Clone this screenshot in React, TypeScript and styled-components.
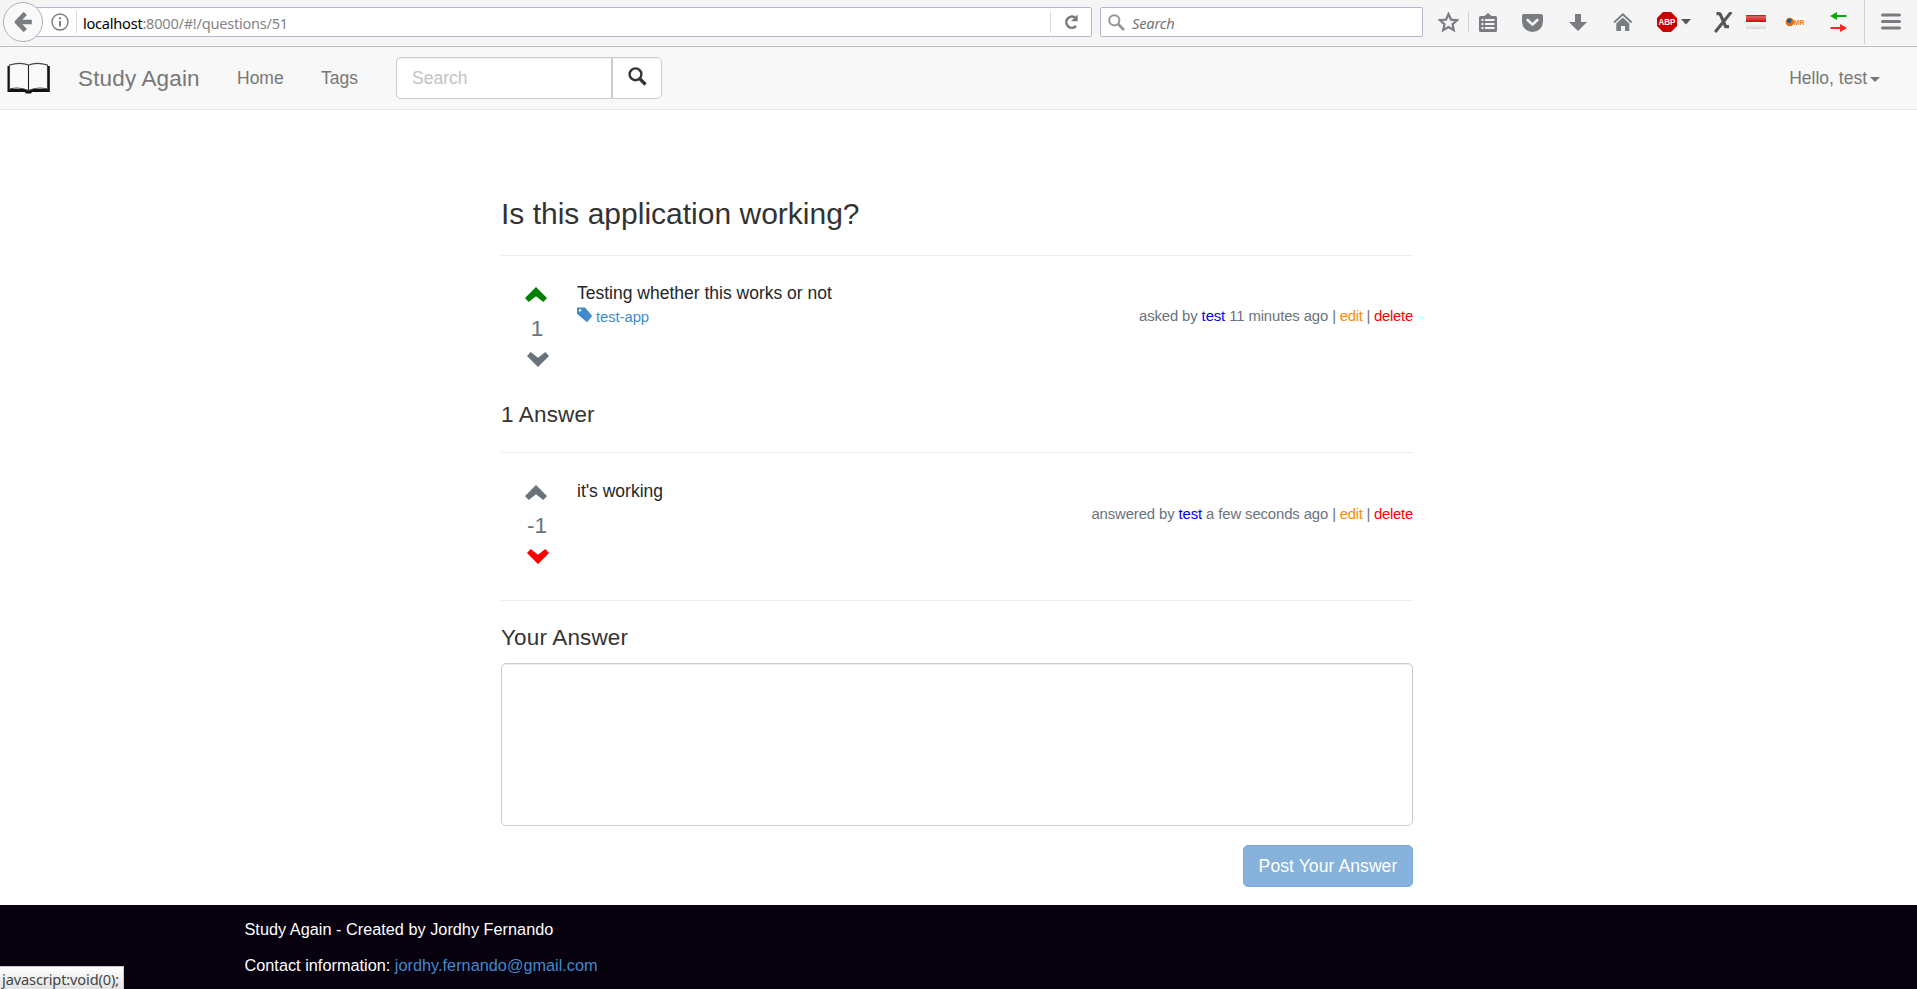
import React from 'react';
import styled, { createGlobalStyle } from 'styled-components';

const GlobalStyle = createGlobalStyle`
  *, *::before, *::after { box-sizing: border-box; }
  body {
    margin: 0;
    background: #fff;
    color: #333;
    font: 17.5px/25px "Liberation Sans", Arial, sans-serif;
  }
  a { text-decoration: none; color: #428bca; }
  h3, h4, p { margin: 0; font-weight: 400; }
  svg { display: block; flex: none; }
`;

const Page = styled.div`
  height: 989px;
  display: flex;
  flex-direction: column;
  position: relative;
  overflow: hidden;
`;

/* Browser toolbar */
const Chrome = styled.div`
  height: 47px;
  flex: none;
  display: flex;
  align-items: flex-start;
  background: #f5f5f5;
  border-bottom: 1px solid #bbbdbf;
  font-family: "Noto Sans", "Open Sans", sans-serif;
  font-size: 14.6px;
`;
const BackButton = styled.div`
  width: 40px;
  height: 40px;
  margin: 2px -10px 0 3px;
  border: 1px solid #a9b2bd;
  border-radius: 50%;
  background: #f9f9f9;
  display: flex;
  align-items: center;
  justify-content: center;
  z-index: 1;
`;
const UrlBar = styled.div`
  width: 1059px;
  height: 30px;
  margin-top: 7px;
  border: 1px solid #b1bac6;
  border-radius: 2px;
  background: #fff;
  display: flex;
  align-items: center;
  padding: 0 13px 0 17px;
`;
const BarRule = styled.div`
  width: 1px;
  height: 22px;
  background: #d9dbdd;
`;
const Url = styled.span`
  flex: 1;
  margin-left: 6px;
  color: #858585;
  letter-spacing: -0.25px;
  line-height: 28px;
  padding-top: 1px;
  b { font-weight: 400; color: #000; }
`;
const SearchBar = styled.div`
  width: 323px;
  height: 30px;
  margin: 7px 0 0 8px;
  border: 1px solid #b1bac6;
  border-radius: 2px;
  background: #fff;
  display: flex;
  align-items: center;
  padding-left: 7px;
  gap: 7px;
  color: #757575;
  font-style: italic;
  letter-spacing: -0.15px;
  span { padding-top: 2px; }
`;
const Tool = styled.div<{ $gap: number; $top?: number }>`
  margin-left: ${p => p.$gap}px;
  margin-top: ${p => p.$top ?? 12}px;
`;
const ToolRule = styled.div<{ $gap: number; $tall?: boolean }>`
  width: 1px;
  height: ${p => (p.$tall ? 44 : 20)}px;
  margin: ${p => (p.$tall ? 0 : 12)}px 0 0 ${p => p.$gap}px;
  background: #cfd1d3;
`;

/* Site navigation */
const Navbar = styled.nav`
  height: 63px;
  flex: none;
  display: flex;
  align-items: center;
  padding: 0 37px 0 7px;
  background: #f8f8f8;
  border-bottom: 1px solid #e7e7e7;
  color: #777;
`;
const Brand = styled.a`
  margin-left: 28px;
  width: 159px;
  color: #777;
  font-size: 22.5px;
  letter-spacing: 0.15px;
`;
const NavLink = styled.a<{ $width: number }>`
  width: ${p => p.$width}px;
  color: #777;
`;
const SearchGroup = styled.div`
  display: flex;
  width: 266px;
  height: 42px;
  border: 1px solid #ccc;
  border-radius: 5px;
  background: #fff;
  box-shadow: inset 0 1px 1px rgba(0, 0, 0, 0.06);
`;
const SearchInput = styled.div`
  width: 216px;
  padding: 8px 15px;
  border-right: 2px solid #ccc;
  color: #c3c3c3;
`;
const SearchButton = styled.div`
  flex: 1;
  padding: 9px 0 0 15px;
`;
const UserMenu = styled.a`
  margin-left: auto;
  display: flex;
  align-items: center;
  gap: 3px;
  color: #777;
`;
const Caret = styled.span`
  border: 5px solid transparent;
  border-top-color: #777;
  border-bottom: 0;
  margin-top: 3px;
`;

/* Question page */
const Main = styled.main`
  flex: none;
  width: 912px;
  height: 795px;
  margin-left: 501px;
  padding-top: 87px;
`;
const Title = styled.h3`
  height: 58px;
  font-size: 30px;
  line-height: 34px;
`;
const Subtitle = styled.h4<{ $height: number; $top?: number }>`
  height: ${p => p.$height}px;
  padding-top: ${p => p.$top ?? 0}px;
  font-size: 22.5px;
  line-height: 26px;
  letter-spacing: 0.15px;
`;
const Rule = styled.div`
  height: 1px;
  background: #eee;
`;
const Post = styled.article<{ $height: number; $top: number }>`
  display: flex;
  height: ${p => p.$height}px;
  padding-top: ${p => p.$top}px;
`;
const Votes = styled.div`
  width: 76px;
  padding: 6px 0 0 24px;
  color: #6a737c;
  font-size: 22.5px;
`;
const Count = styled.div<{ $top: number }>`
  width: 24px;
  height: 25px;
  margin: ${p => p.$top}px 0 11px;
  text-align: center;
  white-space: nowrap;
`;
const Body = styled.div`
  flex: 1;
  min-width: 0;
`;
const Text = styled.p`
  color: #242729;
`;
const Details = styled.div`
  display: flex;
  justify-content: space-between;
  font-size: 14.875px;
  line-height: 21px;
`;
const Tag = styled.a`
  display: flex;
  gap: 4px;
  letter-spacing: -0.08px;
  padding-top: 1px;
`;
const Meta = styled.span`
  margin-left: auto;
  color: #6a737c;
  letter-spacing: -0.11px;
`;
const Actions = styled.span`
  letter-spacing: -0.25px;
`;
const Action = styled.a<{ $color: string }>`
  color: ${p => p.$color};
`;
const AnswerBox = styled.div`
  height: 163px;
  border: 1px solid #ccc;
  border-radius: 5px;
  box-shadow: inset 0 1px 1px rgba(0, 0, 0, 0.075);
`;
const PostButton = styled.button`
  display: block;
  width: 170px;
  height: 42px;
  margin: 19px 0 0 auto;
  padding: 0;
  border: 1px solid #75a9d7;
  border-radius: 5px;
  background: #86b2db;
  color: #fff;
  font: inherit;
  letter-spacing: 0.1px;
`;
const Footer = styled.footer`
  flex: 1;
  padding: 12px 0 0 244.5px;
  background: #06000f;
  color: #fff;
  font-size: 16.25px;
  line-height: 25px;
  letter-spacing: 0.02px;
  p + p { margin-top: 11px; }
`;
const StatusTip = styled.div`
  position: absolute;
  left: 0;
  bottom: 0;
  width: 124px;
  height: 23px;
  padding: 3px 0 0 2px;
  border: 1px solid #c8c8c8;
  border-width: 1px 1px 0 0;
  background: linear-gradient(#fff, #e2e2e2);
  color: #444;
  font: 14.6px/19px "Noto Sans", "Open Sans", sans-serif;
  letter-spacing: -0.13px;
  white-space: nowrap;
`;

const GREY = '#797c80';

const BackIcon = () => (
  <svg width="18" height="20" viewBox="0 0 18 20" fill="none" stroke={GREY} strokeWidth="4.6" strokeLinejoin="round">
    <path d="M17.8 10H4M11.3 1.5 3 10l8.3 8.5" />
  </svg>
);
const InfoIcon = () => (
  <svg width="18" height="18" viewBox="0 0 18 18" fill="none" stroke="#7d7d7d">
    <circle cx="9" cy="9" r="8" strokeWidth="1.4" />
    <path d="M9 8v5.5M9 4.3v2" strokeWidth="2" />
  </svg>
);
const ReloadIcon = () => (
  <svg width="14" height="16" viewBox="0 0 14 16">
    <path d="M11 3.5A5.6 5.6 0 1 0 12 12" fill="none" stroke="#7a7a7a" strokeWidth="2.6" />
    <path d="M13.7.5v6.8H7z" fill="#7a7a7a" />
  </svg>
);
const LoupeIcon = () => (
  <svg width="17" height="17" viewBox="0 0 17 17" fill="none" stroke="#959595">
    <circle cx="6.3" cy="6.3" r="5.1" strokeWidth="2" />
    <path d="m10 10 6 6" strokeWidth="2.8" />
  </svg>
);
const StarIcon = () => (
  <svg width="21" height="20" viewBox="0 0 21 20" fill="none" stroke={GREY} strokeWidth="2.2">
    <path d="m10.5 2 2.5 5.6 6 .6-4.5 4 1.3 6-5.3-3.1-5.3 3.1 1.3-6-4.5-4 6-.6z" />
  </svg>
);
const ClipboardIcon = () => (
  <svg width="18" height="19" viewBox="0 0 18 19">
    <path d="M1.5 3h4L9 0l3.5 3h4q1.500 0 1.500 1.500v13q0 1.500-1.500 1.500h-15Q0 19 0 17.500v-13Q0 3 1.500 3z" fill={GREY} />
    <path d="M2.500 6h2v2h-2zM6 6h9.500v2H6zM2.500 10h2v2h-2zM6 10h9.500v2H6zM2.500 14h2v2h-2zM6 14h9.500v2H6z" fill="#f5f5f5" />
  </svg>
);
const PocketIcon = () => (
  <svg width="21" height="18" viewBox="0 0 21 18">
    <path d="M2 0h17q2 0 2 2v5.500a10.500 10.500 0 0 1-21 0V2Q0 0 2 0z" fill={GREY} />
    <path d="m5.700 6 4.800 4.600L15.300 6" fill="none" stroke="#f5f5f5" strokeWidth="2.6" strokeLinecap="round" strokeLinejoin="round" />
  </svg>
);
const DownloadIcon = () => (
  <svg width="18" height="17" viewBox="0 0 18 17" fill={GREY}>
    <path d="M6 0h6v8h6l-9 9-9-9h6z" />
  </svg>
);
const HomeIcon = () => (
  <svg width="20" height="19" viewBox="0 0 20 19">
    <path d="M1 9.500 9.800 1.300l8.800 8.200" fill="none" stroke={GREY} strokeWidth="1.8" />
    <path d="m3.300 10.500 6.500-6 6.500 6V18H12v-5H8v5H3.300z" fill={GREY} />
  </svg>
);
const AbpIcon = () => (
  <svg width="20" height="20" viewBox="0 0 20 20">
    <path d="M6 0h8l6 6v8l-6 6H6l-6-6V6z" fill="#c80000" />
    <text x="10" y="13.300" fill="#fff" fontFamily="Liberation Sans, sans-serif" fontWeight="700" fontSize="9" textAnchor="middle" textLength="17" lengthAdjust="spacingAndGlyphs">ABP</text>
  </svg>
);
const DropIcon = () => (
  <svg width="10" height="6" viewBox="0 0 10 6" fill="#555"><path d="M0 0h10L5 5.500z" /></svg>
);
const XIcon = () => (
  <svg width="19" height="21" viewBox="0 0 19 21" fill="none" stroke="#555">
    <path d="M2.500 1.600h2.700q.8 0 1.100.8l5.400 12.200h3.300" strokeWidth="3.2" />
    <path d="M17.200 0 1.200 20" strokeWidth="3" />
  </svg>
);
const FlagIcon = () => (
  <svg width="20" height="14" viewBox="0 0 20 14">
    <defs>
      <linearGradient id="flagRed" x2="0" y2="1"><stop stopColor="#b80808" /><stop offset=".25" stopColor="#e26666" /><stop offset="1" stopColor="#d00" /></linearGradient>
      <linearGradient id="flagWhite" x2="0" y2="1"><stop stopColor="#fff" /><stop offset="1" stopColor="#d8d8d8" /></linearGradient>
    </defs>
    <path d="M0 0h20v7H0z" fill="url(#flagRed)" />
    <path d="M0 7h20v7H0z" fill="url(#flagWhite)" />
  </svg>
);
const MrIcon = () => (
  <svg width="20" height="10" viewBox="0 0 20 10">
    <path d="M0 0h20v10H0z" fill="#fff" />
    <circle cx="4.800" cy="5" r="4.300" fill="#e86a10" />
    <circle cx="4.200" cy="3.700" r="2.300" fill="#245a8f" />
    <text x="8.800" y="8" fill="#f47a00" fontFamily="Liberation Sans, sans-serif" fontWeight="700" fontSize="8" textLength="10.8" lengthAdjust="spacingAndGlyphs">MR</text>
  </svg>
);
const SwapIcon = () => (
  <svg width="17" height="20" viewBox="0 0 17 20">
    <path d="M0 4 7 0v3h9.500v2H7v3z" fill="#0aa80a" />
    <path d="m17 16-7-4v3H.500v2H10v3z" fill="#f22" />
  </svg>
);
const MenuIcon = () => (
  <svg width="20" height="17" viewBox="0 0 20 17" stroke={GREY} strokeWidth="3" strokeLinecap="round">
    <path d="M1.500 2h17M1.500 8.500h17M1.500 15h17" />
  </svg>
);
const BookIcon = () => (
  <svg width="43" height="32" viewBox="0 0 43 32">
    <path d="M.5 4H3v23h15l3.500 1.500L25 27h15V4h2.800v26H25l-1 1.500h-5L18 30H.5z" fill="#111" />
    <path d="M2.500 3Q13-.3 21.500 3 30-.3 40.500 3v24Q30 24.500 21.500 28.500 13 24.500 2.500 27z" fill="#fafafa" stroke="#444" strokeWidth="1.1" />
    <path d="M21.500 3v25" stroke="#222" strokeWidth="1.1" />
  </svg>
);
const SearchGlyph = () => (
  <svg width="19" height="19" viewBox="0 0 19 19" fill="none" stroke="#333">
    <circle cx="7.500" cy="7.300" r="5.900" strokeWidth="2.4" />
    <path d="m11.500 11.500 6 6" strokeWidth="3.2" />
  </svg>
);
const Chevron = styled.svg.attrs({ width: 22, height: 15, viewBox: '0 0 22 15' })<{ $color: string; $down?: boolean }>`
  fill: ${p => p.$color};
  transform: ${p => (p.$down ? 'translateX(2px) rotate(180deg)' : 'none')};
`;
const TagIcon = () => (
  <svg width="15" height="15" viewBox="0 0 15 15" fill="#428bca">
    <path fillRule="evenodd" d="M0 .5h8L15.300 9 10 15.300 0 6.800zM3 2.100a1.200 1.200 0 1 0 .01 0z" />
  </svg>
);

const CHEVRON = 'M11 0 22 11 18.300 15l-7.300-5.700L3.700 15 0 11z';

type PostProps = {
  height: number;
  top: number;
  votes: string;
  up: string;
  down: string;
  text: string;
  tag?: string;
  verb: string;
  when: string;
};

const PostView = ({ height, top, votes, up, down, text, tag, verb, when }: PostProps) => (
  <Post $height={height} $top={top}>
    <Votes>
      <Chevron $color={up}><path d={CHEVRON} /></Chevron>
      <Count $top={39 - top}>{votes}</Count>
      <Chevron $color={down} $down><path d={CHEVRON} /></Chevron>
    </Votes>
    <Body>
      <Text>{text}</Text>
      <Details>
        {tag && <Tag><TagIcon />{tag}</Tag>}
        <Meta>
          {verb} by <Action $color="#0000f0">test</Action> {when}{' '}
          <Actions>
            | <Action $color="#ff8c00">edit</Action> | <Action $color="#f00">delete</Action>
          </Actions>
        </Meta>
      </Details>
    </Body>
  </Post>
);

export default function App() {
  return (
    <Page>
      <GlobalStyle />
      <Chrome>
        <BackButton><BackIcon /></BackButton>
        <UrlBar>
          <InfoIcon />
          <Tool $gap={7} $top={0}><BarRule /></Tool>
          <Url><b>localhost</b>:8000/#!/questions/51</Url>
          <BarRule />
          <Tool $gap={13} $top={0}><ReloadIcon /></Tool>
        </UrlBar>
        <SearchBar><LoupeIcon /><span>Search</span></SearchBar>
        <Tool $gap={15}><StarIcon /></Tool>
        <ToolRule $gap={9} />
        <Tool $gap={10} $top={13}><ClipboardIcon /></Tool>
        <Tool $gap={25} $top={14}><PocketIcon /></Tool>
        <Tool $gap={26} $top={14}><DownloadIcon /></Tool>
        <Tool $gap={26} $top={13}><HomeIcon /></Tool>
        <Tool $gap={24}><AbpIcon /></Tool>
        <Tool $gap={4} $top={19}><DropIcon /></Tool>
        <Tool $gap={23}><XIcon /></Tool>
        <Tool $gap={13} $top={15}><FlagIcon /></Tool>
        <Tool $gap={19} $top={17}><MrIcon /></Tool>
        <Tool $gap={25}><SwapIcon /></Tool>
        <ToolRule $gap={17} $tall />
        <Tool $gap={16} $top={13}><MenuIcon /></Tool>
      </Chrome>
      <Navbar>
        <BookIcon />
        <Brand>Study Again</Brand>
        <NavLink $width={84}>Home</NavLink>
        <NavLink $width={75}>Tags</NavLink>
        <SearchGroup>
          <SearchInput>Search</SearchInput>
          <SearchButton><SearchGlyph /></SearchButton>
        </SearchGroup>
        <UserMenu>Hello, test<Caret /></UserMenu>
      </Navbar>
      <Main>
        <Title>Is this application working?</Title>
        <Rule />
        <PostView height={146} top={25} votes="1" up="#008000" down="#6a737c" text="Testing whether this works or not" tag="test-app" verb="asked" when="11 minutes ago" />
        <Subtitle $height={50}>1 Answer</Subtitle>
        <Rule />
        <PostView height={147} top={26} votes="-1" up="#6a737c" down="#f00" text="it's working" verb="answered" when="a few seconds ago" />
        <Rule />
        <Subtitle $height={62} $top={24}>Your Answer</Subtitle>
        <AnswerBox />
        <PostButton>Post Your Answer</PostButton>
      </Main>
      <Footer>
        <p>Study Again - Created by Jordhy Fernando</p>
        <p>Contact information: <a>jordhy.fernando@gmail.com</a></p>
      </Footer>
      <StatusTip>javascript:void(0);</StatusTip>
    </Page>
  );
}
